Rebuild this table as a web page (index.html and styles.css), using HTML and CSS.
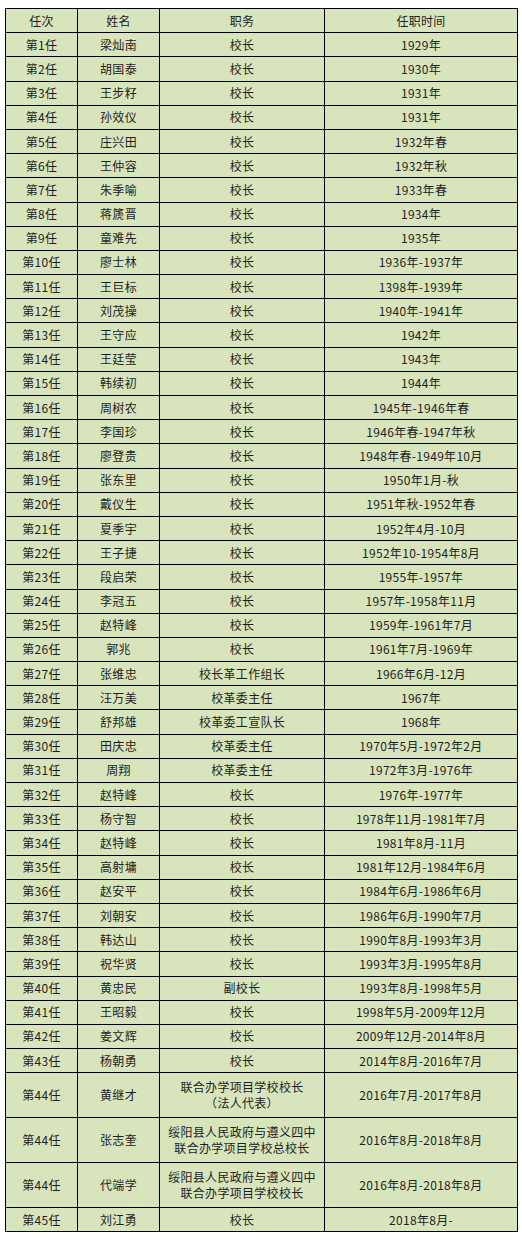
FILE: index.html
```html
<!DOCTYPE html>
<html lang="zh-CN">
<head>
<meta charset="utf-8">
<title>历任校长</title>
<link rel="stylesheet" href="styles.css">
</head>
<body>
<table class="roster">
  <colgroup>
    <col class="c-no">
    <col class="c-name">
    <col class="c-role">
    <col class="c-time">
  </colgroup>
  <tr class="row"><td>任次</td><td>姓名</td><td>职务</td><td>任职时间</td></tr>
  <tr class="row"><td>第1任</td><td>梁灿南</td><td>校长</td><td>1929年</td></tr>
  <tr class="row"><td>第2任</td><td>胡国泰</td><td>校长</td><td>1930年</td></tr>
  <tr class="row"><td>第3任</td><td>王步籽</td><td>校长</td><td>1931年</td></tr>
  <tr class="row"><td>第4任</td><td>孙效仪</td><td>校长</td><td>1931年</td></tr>
  <tr class="row"><td>第5任</td><td>庄兴田</td><td>校长</td><td>1932年春</td></tr>
  <tr class="row"><td>第6任</td><td>王仲容</td><td>校长</td><td>1932年秋</td></tr>
  <tr class="row"><td>第7任</td><td>朱季喻</td><td>校长</td><td>1933年春</td></tr>
  <tr class="row"><td>第8任</td><td>蒋篪晋</td><td>校长</td><td>1934年</td></tr>
  <tr class="row"><td>第9任</td><td>童难先</td><td>校长</td><td>1935年</td></tr>
  <tr class="row"><td>第10任</td><td>廖士林</td><td>校长</td><td>1936年-1937年</td></tr>
  <tr class="row"><td>第11任</td><td>王巨标</td><td>校长</td><td>1398年-1939年</td></tr>
  <tr class="row"><td>第12任</td><td>刘茂操</td><td>校长</td><td>1940年-1941年</td></tr>
  <tr class="row"><td>第13任</td><td>王守应</td><td>校长</td><td>1942年</td></tr>
  <tr class="row"><td>第14任</td><td>王廷莹</td><td>校长</td><td>1943年</td></tr>
  <tr class="row"><td>第15任</td><td>韩续初</td><td>校长</td><td>1944年</td></tr>
  <tr class="row"><td>第16任</td><td>周树农</td><td>校长</td><td>1945年-1946年春</td></tr>
  <tr class="row"><td>第17任</td><td>李国珍</td><td>校长</td><td>1946年春-1947年秋</td></tr>
  <tr class="row"><td>第18任</td><td>廖登贵</td><td>校长</td><td>1948年春-1949年10月</td></tr>
  <tr class="row"><td>第19任</td><td>张东里</td><td>校长</td><td>1950年1月-秋</td></tr>
  <tr class="row"><td>第20任</td><td>戴仪生</td><td>校长</td><td>1951年秋-1952年春</td></tr>
  <tr class="row"><td>第21任</td><td>夏季宇</td><td>校长</td><td>1952年4月-10月</td></tr>
  <tr class="row"><td>第22任</td><td>王子捷</td><td>校长</td><td>1952年10-1954年8月</td></tr>
  <tr class="row"><td>第23任</td><td>段启荣</td><td>校长</td><td>1955年-1957年</td></tr>
  <tr class="row"><td>第24任</td><td>李冠五</td><td>校长</td><td>1957年-1958年11月</td></tr>
  <tr class="row"><td>第25任</td><td>赵特峰</td><td>校长</td><td>1959年-1961年7月</td></tr>
  <tr class="row"><td>第26任</td><td>郭兆</td><td>校长</td><td>1961年7月-1969年</td></tr>
  <tr class="row"><td>第27任</td><td>张维忠</td><td>校长革工作组长</td><td>1966年6月-12月</td></tr>
  <tr class="row"><td>第28任</td><td>汪万美</td><td>校革委主任</td><td>1967年</td></tr>
  <tr class="row"><td>第29任</td><td>舒邦雄</td><td>校革委工宣队长</td><td>1968年</td></tr>
  <tr class="row"><td>第30任</td><td>田庆忠</td><td>校革委主任</td><td>1970年5月-1972年2月</td></tr>
  <tr class="row"><td>第31任</td><td>周翔</td><td>校革委主任</td><td>1972年3月-1976年</td></tr>
  <tr class="row"><td>第32任</td><td>赵特峰</td><td>校长</td><td>1976年-1977年</td></tr>
  <tr class="row"><td>第33任</td><td>杨守智</td><td>校长</td><td>1978年11月-1981年7月</td></tr>
  <tr class="row"><td>第34任</td><td>赵特峰</td><td>校长</td><td>1981年8月-11月</td></tr>
  <tr class="row"><td>第35任</td><td>高射墉</td><td>校长</td><td>1981年12月-1984年6月</td></tr>
  <tr class="row"><td>第36任</td><td>赵安平</td><td>校长</td><td>1984年6月-1986年6月</td></tr>
  <tr class="row"><td>第37任</td><td>刘朝安</td><td>校长</td><td>1986年6月-1990年7月</td></tr>
  <tr class="row"><td>第38任</td><td>韩达山</td><td>校长</td><td>1990年8月-1993年3月</td></tr>
  <tr class="row"><td>第39任</td><td>祝华贤</td><td>校长</td><td>1993年3月-1995年8月</td></tr>
  <tr class="row"><td>第40任</td><td>黄忠民</td><td>副校长</td><td>1993年8月-1998年5月</td></tr>
  <tr class="row"><td>第41任</td><td>王昭毅</td><td>校长</td><td>1998年5月-2009年12月</td></tr>
  <tr class="row"><td>第42任</td><td>姜文辉</td><td>校长</td><td>2009年12月-2014年8月</td></tr>
  <tr class="row"><td>第43任</td><td>杨朝勇</td><td>校长</td><td>2014年8月-2016年7月</td></tr>
  <tr class="row tall"><td>第44任</td><td>黄继才</td><td>联合办学项目学校校长<br>（法人代表）</td><td>2016年7月-2017年8月</td></tr>
  <tr class="row tall"><td>第44任</td><td>张志奎</td><td>绥阳县人民政府与遵义四中<br>联合办学项目学校总校长</td><td>2016年8月-2018年8月</td></tr>
  <tr class="row tall"><td>第44任</td><td>代端学</td><td>绥阳县人民政府与遵义四中<br>联合办学项目学校校长</td><td>2016年8月-2018年8月</td></tr>
  <tr class="row"><td>第45任</td><td>刘江勇</td><td>校长</td><td>2018年8月-</td></tr>
</table>
</body>
</html>
```

FILE: styles.css
```css
html, body {
  margin: 0;
  padding: 0;
  background: #ffffff;
}

body {
  padding: 8px 0 0 5px;
}

.roster {
  border-collapse: collapse;
  table-layout: fixed;
  width: 512px;
  background: #d8e4bc;
  font-family: "Noto Sans CJK SC", "Noto Sans", sans-serif;
  font-size: 12px;
  color: #1e1e1e;
}

.c-no { width: 72px; }
.c-name { width: 82px; }
.c-role { width: 165px; }
.c-time { width: 193px; }

.roster td {
  border: 1px solid #000000;
  padding: 0;
  text-align: center;
  vertical-align: middle;
  line-height: 16px;
  white-space: nowrap;
  letter-spacing: 0.3px;
}

.row {
  height: 24.19px;
}

.row.tall {
  height: 45px;
}
```
